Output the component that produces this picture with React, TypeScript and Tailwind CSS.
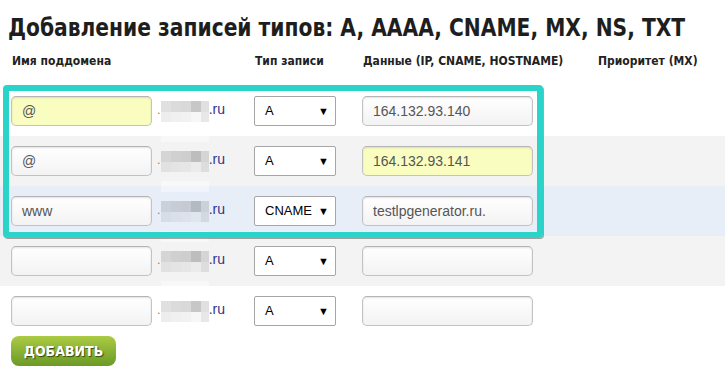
import React from "react";

const cond = "'DejaVu Sans Condensed', 'Liberation Sans Narrow', 'Roboto', sans-serif";
const arial = "'Liberation Sans', Arial, sans-serif";

type Row = { name: string; type: string; data: string; bg: string; nameYellow?: boolean; dataYellow?: boolean };

const rows: Row[] = [
  { name: "@", type: "A", data: "164.132.93.140", bg: "bg-white", nameYellow: true },
  { name: "@", type: "A", data: "164.132.93.141", bg: "bg-[#f3f3f3]", dataYellow: true },
  { name: "www", type: "CNAME", data: "testlpgenerator.ru.", bg: "bg-[#e8eef8]" },
  { name: "", type: "A", data: "", bg: "bg-[#f3f3f3]" },
  { name: "", type: "A", data: "", bg: "bg-white" },
];

const topShades = ["bg-black/[0.12]", "bg-black/[0.14]", "bg-black/[0.15]", "bg-black/[0.22]", "bg-black/[0.12]"];
const botShades = ["bg-black/[0.07]", "bg-black/[0.06]", "bg-black/[0.05]", "bg-black/[0.03]", "bg-black/[0.09]"];

function Blur() {
  return (
    <div className="relative flex flex-col w-[48px]">
      <div className="flex h-[11px]">
        {topShades.map((c, i) => (
          <div key={i} className={`${c} ${i === 4 ? "w-[8px]" : "w-[10px]"} h-full`} />
        ))}
      </div>
      <div className="flex h-[10px]">
        {botShades.map((c, i) => (
          <div key={i} className={`${c} ${i === 4 ? "w-[8px]" : "w-[10px]"} h-full`} />
        ))}
      </div>
      <div className="absolute left-0 top-[30px] w-[48px] h-[11px] bg-white/40" />
    </div>
  );
}

function TextBox({ value, yellow, w }: { value: string; yellow?: boolean; w: string }) {
  return (
    <div
      className={`${w} h-[30px] rounded-[5px] border border-[#c2c2c2] border-t-[#b4b4b4] flex items-center pl-[10px] text-[14px] text-[#555] shadow-[inset_0_1px_2px_rgba(0,0,0,0.12)] ${
        yellow ? "bg-[#fafdc0]" : "bg-gradient-to-b from-white to-[#f3f3f3]"
      }`}
      style={{ fontFamily: arial }}
    >
      {value}
    </div>
  );
}

function Select({ value }: { value: string }) {
  return (
    <div
      className="w-[82px] h-[30px] rounded-[2px] border border-[#a6a6a6] bg-white flex items-center justify-between pl-[10px] pr-[6px] text-[13px] text-black"
      style={{ fontFamily: arial }}
    >
      <span>{value}</span>
      <span className="text-[11px] leading-none">▼</span>
    </div>
  );
}

export default function App() {
  return (
    <div className="relative w-[725px] h-[371px] bg-white overflow-hidden">
      <div className="pl-[8px] pt-[13px] h-[46px]">
        <h1
          className="inline-block whitespace-nowrap origin-left scale-x-[0.9] text-[25px] leading-[30px] font-bold text-[#1e1e1e]"
          style={{ fontFamily: cond }}
        >
          Добавление записей типов: A, AAAA, CNAME, MX, NS, TXT
        </h1>
      </div>
      <div
        className="flex h-[32px] items-center pb-[3px] text-[12px] font-bold text-[#222]"
        style={{ fontFamily: cond }}
      >
        <div className="w-[255px] pl-[12px]">Имя поддомена</div>
        <div className="w-[108px]">Тип записи</div>
        <div className="w-[235px]">Данные (IP, CNAME, HOSTNAME)</div>
        <div>Приоритет (MX)</div>
      </div>
      <div className="h-[8px]" />
      {rows.map((r, i) => (
        <div key={i} className={`${r.bg} h-[50px] flex items-center pl-[11px]`}>
          <TextBox value={r.name} yellow={r.nameYellow} w="w-[141px]" />
          <div className="w-[102px] flex items-start pl-[5px] h-[30px] pt-[5px]">
            <span className="text-[#e07020] text-[13px] leading-[16px] mt-[1px]" style={{ fontFamily: arial }}>.</span>
            <Blur />
            <span className="text-[#333388] text-[14px] leading-[16px]" style={{ fontFamily: arial }}>.ru</span>
          </div>
          <Select value={r.type} />
          <div className="w-[26px]" />
          <TextBox value={r.data} yellow={r.dataYellow} w="w-[171px]" />
        </div>
      ))}
      <div className="pl-[11px]">
        <button
          className="w-[105px] h-[30px] rounded-[8px] bg-gradient-to-b from-[#abcb44] to-[#6b9a26] text-white text-[14px] font-bold [text-shadow:1px_1px_1px_rgba(30,50,0,0.8)]"
          style={{ fontFamily: cond }}
        >
          ДОБАВИТЬ
        </button>
      </div>
      <div className="absolute left-[3px] top-[85px] w-[540px] h-[153px] rounded-[4px] border-[6px] border-[#2ad4c8] shadow-[1px_1px_0_rgba(80,80,80,0.5)] pointer-events-none" />
    </div>
  );
}
